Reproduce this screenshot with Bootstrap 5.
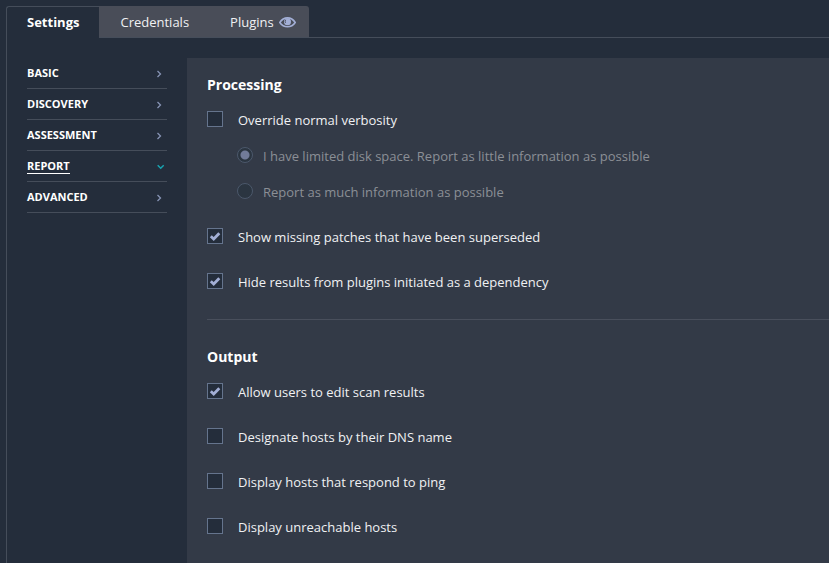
<!DOCTYPE html>
<html lang="en">
<head>
<meta charset="utf-8">
<meta name="viewport" content="width=device-width, initial-scale=1">
<title>Scan Settings</title>
<link href="https://cdn.jsdelivr.net/npm/bootstrap@5.3.0/dist/css/bootstrap.min.css" rel="stylesheet">
<style>
body { background: #242d3b; color: #f0f1f3; font-family: "Open Sans", sans-serif; font-size: 13px; line-height: 20px; }
.page-wrap { padding: 6px 0 0 6px; }
.tab-strip { height: 32px; }
.tab-strip .nav-link { color: #f0f1f3; background: #494d58; border-radius: 0; padding: 6px 15px 6px 21px; line-height: 20px; height: 31px; }
.tab-strip .tab-current { background: #242d3b; color: #fff; font-weight: 700; border: 1px solid #454d5a; border-width: 1px 0 0 1px; border-top-left-radius: 3px; padding: 5px 20px; height: 32px; }
.tab-strip .tab-last { border-top-right-radius: 3px; padding-right: 13px; padding-left: 26px; gap: 5px; }
.tab-rule { border-bottom: 1px solid #454d5a; }
.settings-body { border-left: 1px solid #454d5a; padding-top: 20px; min-height: calc(100vh - 38px); }
.side-menu { width: 140px; margin: 0 20px; }
.side-menu .nav-link { color: #fff; font-size: 11px; font-weight: 700; line-height: 16px; padding: 7px 0; border-bottom: 1px solid #454d5a; }
.side-menu .menu-current { box-shadow: inset 0 -1px 0 #fff; }
.option-panel { background: #333a47; padding: 17px 0 24px 20px; min-width: 0; }
.option-panel h2 { font-size: 14px; font-weight: 700; line-height: 20px; color: #fff; margin-bottom: 15px; }
.option-list { gap: 25px; }
.option-row { gap: 15px; }
.option-row .form-check-input { width: 16px; height: 16px; margin: 1px 0 0; background-color: #242d3b; border: 1px solid #65748d; border-radius: 0; background-size: 16px; }
.option-row .form-check-input:checked[type=checkbox] { background-image: url("data:image/svg+xml,%3Csvg xmlns='http://www.w3.org/2000/svg' viewBox='0 0 16 16'%3E%3Cpath d='M3.800 8.200 6.700 11 12.300 5.200' fill='none' stroke='%23a3afd6' stroke-width='2.800'/%3E%3C/svg%3E"); }
.radio-list { gap: 16px; padding: 16px 0 0 30px; }
.radio-list .option-row { gap: 10px; }
.option-row .form-check-input[type=radio] { border-radius: 50%; border-color: #4b586b; background-color: #2b3541; opacity: 1; }
.option-row .form-check-input:checked[type=radio] { background-image: radial-gradient(circle, #717b99 0 4px, transparent 5px); }
.option-row .form-check-input:disabled ~ .form-check-label { color: #8b8f96; opacity: 1; }
.option-panel hr { margin: 27px 0; border-top: 1px solid #494f5c; opacity: 1; }
.form-check-label { padding-top: 1px; line-height: 19px; }
</style>
</head>
<body>
<div class="page-wrap">
  <nav class="tab-strip nav flex-nowrap" aria-label="Scan sections">
    <a class="nav-link tab-current" href="#settings" aria-current="page">Settings</a>
    <div class="tab-rule d-flex flex-grow-1">
      <a class="nav-link" href="#credentials">Credentials</a>
      <a class="nav-link tab-last d-flex align-items-center" href="#plugins">Plugins
        <svg class="flex-shrink-0" width="17" height="12" viewBox="0 0 17 12" aria-hidden="true"><path d="M.8 6.500C2.800 3.300 5.400 1.900 8.500 1.900S14.200 3.300 16.200 6.500C14.200 9.500 11.600 10.800 8.500 10.800S2.800 9.500.8 6.500Z" fill="none" stroke="#a3afd6" stroke-width="1.600"/><circle cx="8.500" cy="5.700" r="3.500" fill="#a3afd6"/><path d="M6.600 3.800q-.8 1.600 0 3" fill="none" stroke="#494d58" stroke-width=".9"/></svg>
      </a>
    </div>
  </nav>
  <div class="settings-body d-flex">
    <nav class="side-menu nav flex-column flex-nowrap flex-shrink-0" aria-label="Settings groups">
      <a class="nav-link d-flex justify-content-between" href="#basic">BASIC<svg width="12" height="16" viewBox="0 0 12 16" fill="none" stroke="#8794b5" stroke-width="1.300" aria-hidden="true"><path d="m2.500 6 3 3-3 3"/></svg></a>
      <a class="nav-link d-flex justify-content-between" href="#discovery">DISCOVERY<svg width="12" height="16" viewBox="0 0 12 16" fill="none" stroke="#8794b5" stroke-width="1.300" aria-hidden="true"><path d="m2.500 6 3 3-3 3"/></svg></a>
      <a class="nav-link d-flex justify-content-between" href="#assessment">ASSESSMENT<svg width="12" height="16" viewBox="0 0 12 16" fill="none" stroke="#8794b5" stroke-width="1.300" aria-hidden="true"><path d="m2.500 6 3 3-3 3"/></svg></a>
      <a class="nav-link d-flex justify-content-between" href="#report" aria-current="true"><span class="menu-current">REPORT</span><svg width="12" height="16" viewBox="0 0 12 16" fill="none" stroke="#18a3b0" stroke-width="1.500" aria-hidden="true"><path d="m2.700 7.200 3 3 3-3"/></svg></a>
      <a class="nav-link d-flex justify-content-between" href="#advanced">ADVANCED<svg width="12" height="16" viewBox="0 0 12 16" fill="none" stroke="#8794b5" stroke-width="1.300" aria-hidden="true"><path d="m2.500 6 3 3-3 3"/></svg></a>
    </nav>
    <main class="option-panel flex-grow-1">
      <section>
        <h2>Processing</h2>
        <div class="option-list d-flex flex-column">
          <div>
            <div class="option-row d-flex"><input class="form-check-input flex-shrink-0" type="checkbox" id="verbosity"><label class="form-check-label" for="verbosity">Override normal verbosity</label></div>
            <div class="radio-list d-flex flex-column">
              <div class="option-row d-flex"><input class="form-check-input flex-shrink-0" type="radio" name="detail" id="little" checked disabled><label class="form-check-label" for="little">I have limited disk space. Report as little information as possible</label></div>
              <div class="option-row d-flex"><input class="form-check-input flex-shrink-0" type="radio" name="detail" id="much" disabled><label class="form-check-label" for="much">Report as much information as possible</label></div>
            </div>
          </div>
          <div class="option-row d-flex"><input class="form-check-input flex-shrink-0" type="checkbox" id="superseded" checked><label class="form-check-label" for="superseded">Show missing patches that have been superseded</label></div>
          <div class="option-row d-flex"><input class="form-check-input flex-shrink-0" type="checkbox" id="dependency" checked><label class="form-check-label" for="dependency">Hide results from plugins initiated as a dependency</label></div>
        </div>
      </section>
      <hr>
      <section>
        <h2>Output</h2>
        <div class="option-list d-flex flex-column">
          <div class="option-row d-flex"><input class="form-check-input flex-shrink-0" type="checkbox" id="edit" checked><label class="form-check-label" for="edit">Allow users to edit scan results</label></div>
          <div class="option-row d-flex"><input class="form-check-input flex-shrink-0" type="checkbox" id="dns"><label class="form-check-label" for="dns">Designate hosts by their DNS name</label></div>
          <div class="option-row d-flex"><input class="form-check-input flex-shrink-0" type="checkbox" id="ping"><label class="form-check-label" for="ping">Display hosts that respond to ping</label></div>
          <div class="option-row d-flex"><input class="form-check-input flex-shrink-0" type="checkbox" id="unreachable"><label class="form-check-label" for="unreachable">Display unreachable hosts</label></div>
        </div>
      </section>
    </main>
  </div>
</div>
<script src="https://cdn.jsdelivr.net/npm/bootstrap@5.3.0/dist/js/bootstrap.bundle.min.js"></script>
</body>
</html>
